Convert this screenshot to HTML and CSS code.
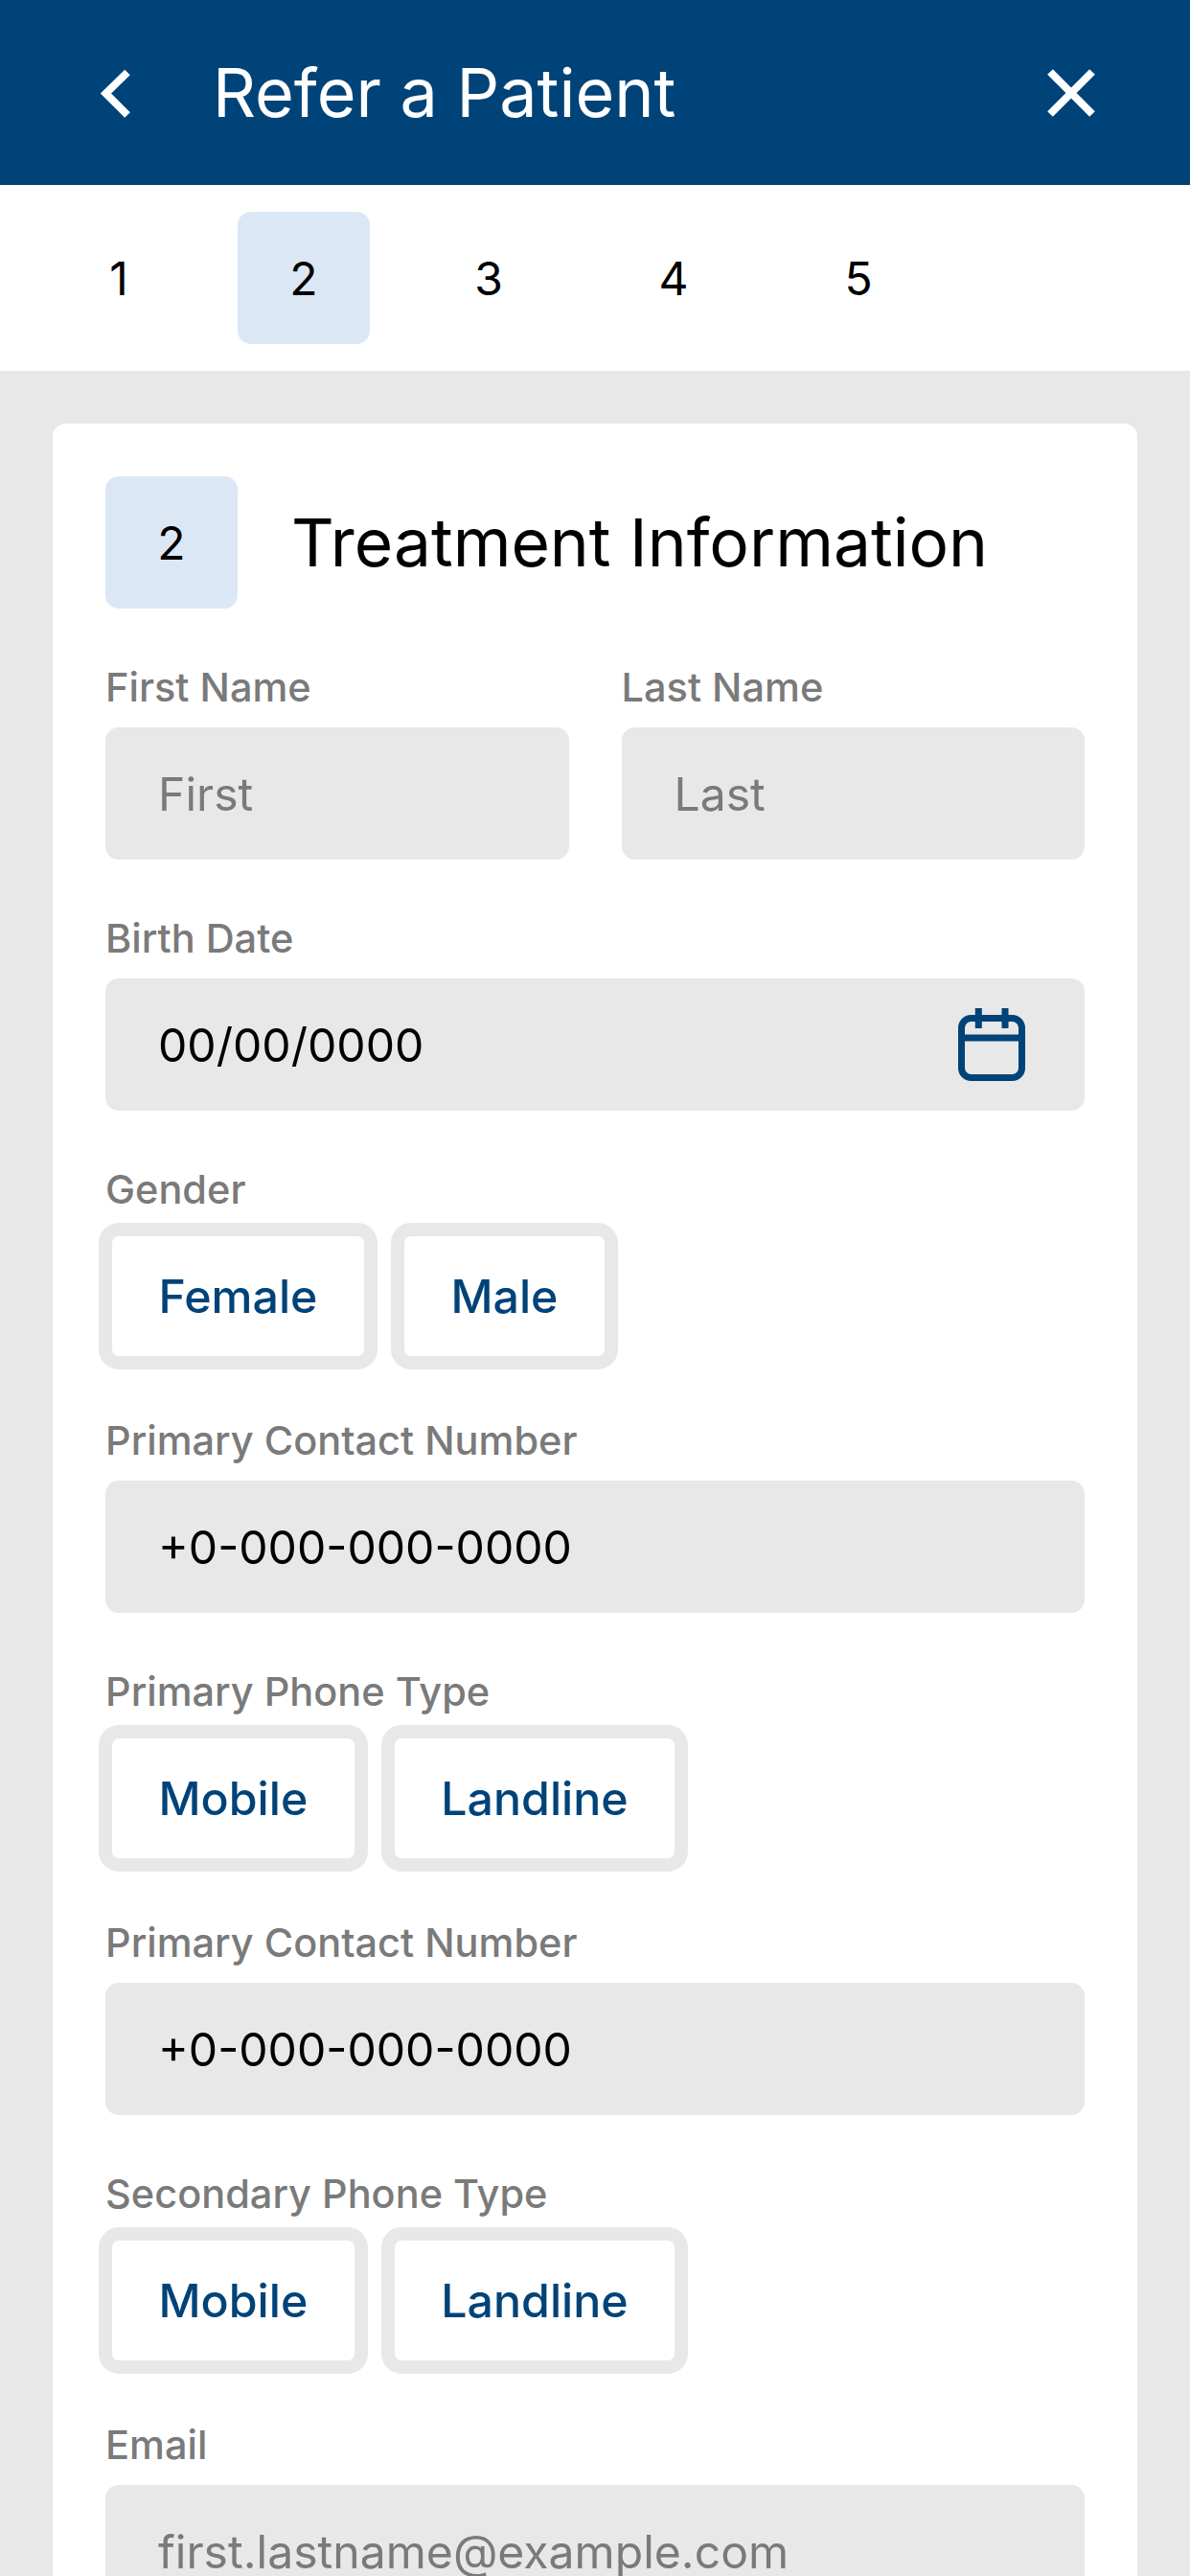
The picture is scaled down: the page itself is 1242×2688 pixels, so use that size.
FILE: index.html
```html
<!DOCTYPE html>
<html lang="en">
<head>
<meta charset="utf-8">
<title>Refer a Patient</title>
<link rel="stylesheet" href="styles.css">
</head>
<body>
<div class="screen">
  <header class="appbar">
    <div class="appbar-left">
      <svg class="icon-back" viewBox="0 0 36 60" aria-hidden="true"><path d="M29 8.5 L6.5 30.5 L29 53"/></svg>
      <h1 class="appbar-title">Refer a Patient</h1>
    </div>
    <svg class="icon-close" viewBox="0 0 64 64" aria-hidden="true"><path d="M10 10 L54 54 M54 10 L10 54"/></svg>
  </header>
  <nav class="steps">
    <span class="step">1</span>
    <span class="step step-active">2</span>
    <span class="step">3</span>
    <span class="step">4</span>
    <span class="step">5</span>
  </nav>
  <main class="content">
    <section class="card">
      <div class="card-head">
        <span class="step step-active">2</span>
        <h2 class="card-title">Treatment Information</h2>
      </div>
      <div class="row">
        <div class="field">
          <label class="label">First Name</label>
          <div class="input placeholder">First</div>
        </div>
        <div class="field">
          <label class="label">Last Name</label>
          <div class="input placeholder">Last</div>
        </div>
      </div>
      <div class="field">
        <label class="label">Birth Date</label>
        <div class="input input-icon">
          <span>00/00/0000</span>
          <svg class="icon-cal" viewBox="0 0 70 76" aria-hidden="true">
            <rect x="3.5" y="10.5" width="63" height="62" rx="10"/>
            <path d="M3.5 31 H66.5 M21.3 0 V21 M49 0 V21"/>
          </svg>
        </div>
      </div>
      <div class="field">
        <label class="label">Gender</label>
        <div class="options">
          <span class="option">Female</span>
          <span class="option">Male</span>
        </div>
      </div>
      <div class="field">
        <label class="label">Primary Contact Number</label>
        <div class="input">+0-000-000-0000</div>
      </div>
      <div class="field">
        <label class="label">Primary Phone Type</label>
        <div class="options">
          <span class="option">Mobile</span>
          <span class="option">Landline</span>
        </div>
      </div>
      <div class="field">
        <label class="label">Primary Contact Number</label>
        <div class="input">+0-000-000-0000</div>
      </div>
      <div class="field">
        <label class="label">Secondary Phone Type</label>
        <div class="options">
          <span class="option">Mobile</span>
          <span class="option">Landline</span>
        </div>
      </div>
      <div class="field">
        <label class="label">Email</label>
        <div class="input placeholder">first.lastname@example.com</div>
      </div>
    </section>
  </main>
</div>
</body>
</html>
```
FILE: styles.css
```css
* { box-sizing: border-box; }
html, body { margin: 0; padding: 0; }
body { font-family: Inter, "Liberation Sans", sans-serif; background: #e8e8e8; color: #000; }
.screen { width: 1242px; height: 2688px; overflow: hidden; display: flex; flex-direction: column; }

.appbar { height: 193px; flex: none; background: #004378; color: #fff; display: flex; align-items: center; justify-content: space-between; padding: 0 92px 0 104px; }
.appbar-left { display: flex; align-items: center; }
.icon-back { width: 36px; height: 60px; margin-right: 82px; }
.icon-back path, .icon-close path { fill: none; stroke: #fff; stroke-width: 8; }
.icon-close { width: 64px; height: 64px; }
.appbar-title { margin: 0; font-size: 70px; font-weight: 400; line-height: 80px; }

.steps { height: 194px; flex: none; background: #fff; display: flex; align-items: center; padding-left: 55px; gap: 55px; }
.step { width: 138px; height: 138px; border-radius: 14px; display: flex; align-items: center; justify-content: center; font-size: 48px; flex: none; }
.step-active { background: #dce7f6; }

.content { flex: 1; padding: 55px; }
.card { background: #fff; border-radius: 14px; padding: 55px 55px 100px; }
.card-head { display: flex; align-items: center; gap: 56px; margin-bottom: 55px; }
.card-title { margin: 0; font-size: 69.4px; font-weight: 400; line-height: 78px; }

.row { display: flex; gap: 55px; }
.row .field { flex: 1; }
.field { margin-bottom: 55px; }
.label { display: block; font-size: 41.5px; font-weight: 500; color: #7a7a7a; line-height: 55px; margin-bottom: 14px; }
.input { height: 138px; background: #e8e8e8; border-radius: 14px; padding: 0 55px; display: flex; align-items: center; font-size: 48.1px; }
.placeholder { color: #7a7a7a; }
.input-icon { justify-content: space-between; padding-right: 62px; }
.icon-cal { width: 70px; height: 76px; }
.icon-cal rect, .icon-cal path { fill: none; stroke: #004378; stroke-width: 7; }

.options { display: flex; gap: 14px; margin: -7px 0 -8px -7px; }
.option { height: 153px; padding: 0 48.5px; border: 14px solid #e8e8e8; border-radius: 21px; background: #fff; display: flex; align-items: center; font-size: 48.3px; font-weight: 500; color: #004378; }
```
